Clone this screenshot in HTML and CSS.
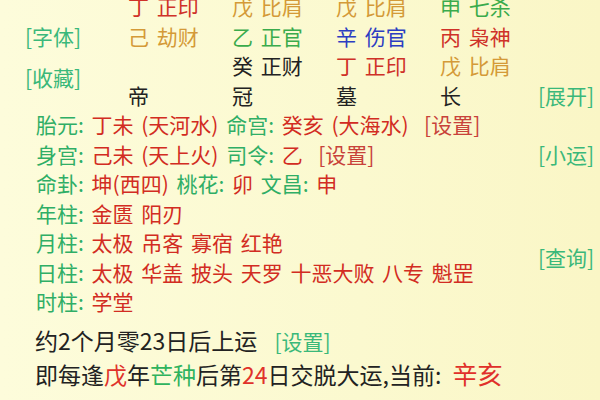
FILE: index.html
```html
<!DOCTYPE html>
<html lang="zh">
<head>
<meta charset="utf-8">
<title>排盘</title>
<link rel="stylesheet" href="styles.css">
</head>
<body>
<div class="page">
  <div class="chart">
    <span class="cell"></span>
    <span class="cell red">丁 正印</span>
    <span class="cell orange">戊 比肩</span>
    <span class="cell orange">戊 比肩</span>
    <span class="cell green">申 七杀</span>
    <span class="cell"></span>

    <a class="cell link tool">[字体]</a>
    <span class="cell orange">己 劫财</span>
    <span class="cell green">乙 正官</span>
    <span class="cell blue">辛 伤官</span>
    <span class="cell red">丙 枭神</span>
    <span class="cell"></span>

    <a class="cell link tool fav">[收藏]</a>
    <span class="cell"></span>
    <span class="cell dark">癸 正财</span>
    <span class="cell red">丁 正印</span>
    <span class="cell orange">戊 比肩</span>
    <span class="cell"></span>

    <span class="cell dark">帝</span>
    <span class="cell dark">冠</span>
    <span class="cell dark">墓</span>
    <span class="cell dark">长</span>
    <a class="cell link">[展开]</a>
  </div>

  <div class="info">
    <p class="line"><span class="lab">胎元:</span> <span class="val">丁未 (天河水)</span> <span class="lab">命宫:</span> <span class="val">癸亥 (大海水)</span>&nbsp; <a class="set">[设置]</a></p>
    <p class="line"><span class="lab">身宫:</span> <span class="val">己未 (天上火)</span> <span class="lab">司令:</span> <span class="val">乙</span>&nbsp; <a class="set">[设置]</a></p>
    <p class="line"><span class="lab">命卦:</span> <span class="val">坤(西四)</span> <span class="lab">桃花:</span> <span class="val">卯</span> <span class="lab">文昌:</span> <span class="val">申</span></p>
    <p class="line"><span class="lab">年柱:</span> <span class="val">金匮 阳刃</span></p>
    <p class="line"><span class="lab">月柱:</span> <span class="val">太极 吊客 寡宿 红艳</span></p>
    <p class="line"><span class="lab">日柱:</span> <span class="val">太极 华盖 披头 天罗 十恶大败 八专 魁罡</span></p>
    <p class="line"><span class="lab">时柱:</span> <span class="val">学堂</span></p>
    <a class="link side xiaoyun">[小运]</a>
    <a class="link side chaxun">[查询]</a>
  </div>

  <div class="yun">
    <p class="yline">约2个月零23日后上运 <a class="link yset">[设置]</a></p>
    <p class="yline">即每逢<span class="hl-red">戊</span>年<span class="hl-green">芒种</span>后第<span class="hl-red">24</span>日交脱大运,当前: <span class="cur">辛亥</span></p>
  </div>
</div>
</body>
</html>
```

FILE: styles.css
```css
html, body {
  margin: 0;
  padding: 0;
}

body {
  background: linear-gradient(90deg, #fdfcdb 0%, #fbf9cf 60%, #faf6c6 100%);
  font-family: "Noto Sans CJK SC", "Noto Sans", sans-serif;
  font-size: 21px;
  line-height: 29.5px;
  color: #222;
  width: 600px;
  height: 400px;
  overflow: hidden;
}

.page {
  margin-top: -8px;
}

.chart {
  display: grid;
  grid-template-columns: 128px 104px 104px 104px 98px 1fr;
  grid-auto-rows: 29.5px;
  word-spacing: 3px;
}

.cell {
  white-space: nowrap;
}

.tool {
  padding-left: 25px;
}

.fav {
  grid-row: span 2;
  align-self: center;
  margin-bottom: 6px;
}

.link {
  color: #3ab87a;
  text-decoration: none;
}

.red { color: #cf3128; }
.orange { color: #d49a38; }
.green { color: #3aab4c; }
.blue { color: #2c3dc2; }
.dark { color: #222; }

.info {
  display: grid;
  grid-template-columns: 502px 1fr;
  grid-auto-rows: 29.5px;
  padding-left: 36px;
  word-spacing: 3px;
}

.line {
  grid-column: 1;
  margin: 0;
  white-space: nowrap;
}

.lab { color: #2fae66; }
.val { color: #d22c22; }
.set { color: #c8423a; }

.side {
  grid-column: 2;
  white-space: nowrap;
}

.xiaoyun {
  grid-row: 2;
}

.chaxun {
  grid-row: 5 / span 2;
  align-self: center;
}

.yun {
  margin-top: 7px;
  padding-left: 35px;
}

.yline {
  margin: 0;
  font-size: 23px;
  line-height: 32px;
  white-space: nowrap;
  color: #222;
}

.yset {
  font-size: 21px;
  margin-left: 12px;
}

.hl-red { color: #e0322a; }
.hl-green { color: #2fb35e; }

.cur {
  color: #e0302a;
  font-size: 25px;
  margin-left: 6px;
}
```
